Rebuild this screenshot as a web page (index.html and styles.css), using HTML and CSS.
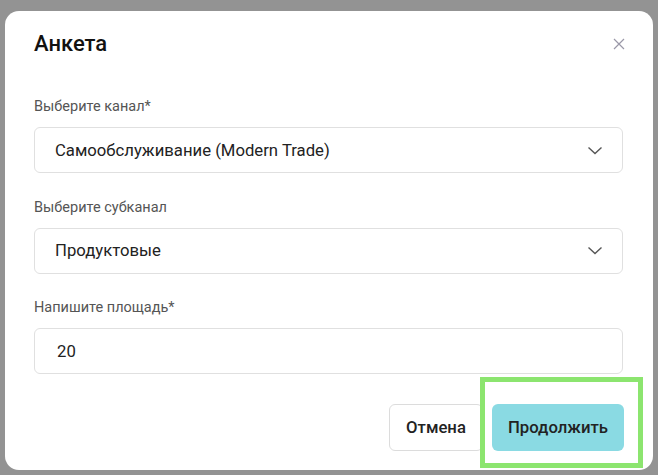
FILE: index.html
```html
<!DOCTYPE html>
<html lang="ru">
<head>
<meta charset="utf-8">
<link rel="stylesheet" href="styles.css">
</head>
<body>
<div class="dialog">
  <div class="header">
    <h1 class="title">Анкета</h1>
    <button class="close" aria-label="Закрыть">
      <svg width="12" height="12" viewBox="0 0 12 12"><path d="M1 1L11 11M11 1L1 11" stroke="#9a98a8" stroke-width="1.2" fill="none"/></svg>
    </button>
  </div>
  <div class="field first">
    <div class="label">Выберите канал*</div>
    <div class="input select">
      <span>Самообслуживание (Modern Trade)</span>
      <svg class="chev" width="16" height="9" viewBox="0 0 16 9"><path d="M1.5 1.5L8 7.5L14.5 1.5" stroke="#555" stroke-width="1.4" fill="none"/></svg>
    </div>
  </div>
  <div class="field">
    <div class="label">Выберите субканал</div>
    <div class="input select">
      <span>Продуктовые</span>
      <svg class="chev" width="16" height="9" viewBox="0 0 16 9"><path d="M1.5 1.5L8 7.5L14.5 1.5" stroke="#555" stroke-width="1.4" fill="none"/></svg>
    </div>
  </div>
  <div class="field">
    <div class="label">Напишите площадь*</div>
    <div class="input text"><span>20</span></div>
  </div>
  <div class="actions">
    <button class="btn cancel">Отмена</button>
    <button class="btn primary">Продолжить</button>
  </div>
  <div class="highlight"></div>
</div>
</body>
</html>
```
FILE: styles.css
```css
* { box-sizing: border-box; }
html, body { margin: 0; padding: 0; }
body {
  background: #939393;
  font-family: Roboto, "Liberation Sans", Arial, sans-serif;
  width: 658px;
  height: 475px;
  overflow: hidden;
}
.dialog {
  position: relative;
  margin: 11px 5px 0 5px;
  width: 648px;
  height: 459px;
  background: #fff;
  border-radius: 14px;
  padding: 0 30px 0 29px;
}
.header {
  display: flex;
  align-items: center;
  justify-content: space-between;
  padding-top: 21px;
  height: 45px;
}
.title {
  margin: 0;
  font-size: 22px;
  line-height: 24px;
  font-weight: 500;
  color: #111;
}
.close {
  border: 0;
  background: none;
  padding: 0;
  margin-right: -3px;
  width: 14px;
  height: 14px;
  display: flex;
  align-items: center;
  justify-content: center;
}
.field { margin-top: 24.5px; }
.field.first { margin-top: 41px; }
.label {
  font-size: 14.5px;
  line-height: 20px;
  color: #555;
  margin-bottom: 10px;
}
.input {
  height: 46px;
  border: 1px solid #e0e0e0;
  border-radius: 6px;
  display: flex;
  align-items: center;
  justify-content: space-between;
  padding: 0 19px 0 20px;
  font-size: 16.7px;
  color: #222;
}
.input.text { padding-left: 22px; }
.chev { display: block; }
.actions {
  display: flex;
  justify-content: flex-end;
  gap: 9px;
  margin-top: 30px;
  margin-right: -1px;
}
.btn {
  height: 47px;
  border-radius: 6px;
  font-family: inherit;
  font-size: 16.7px;
  font-weight: 500;
  color: #222;
  cursor: pointer;
}
.cancel {
  width: 94px;
  background: #fff;
  border: 1px solid #dcdcdc;
}
.primary {
  width: 132px;
  background: #8adae3;
  border: 0;
}
.highlight {
  position: absolute;
  left: 475px;
  top: 366px;
  width: 163px;
  height: 91px;
  border: 5px solid #8ce56f;
  pointer-events: none;
}
```
